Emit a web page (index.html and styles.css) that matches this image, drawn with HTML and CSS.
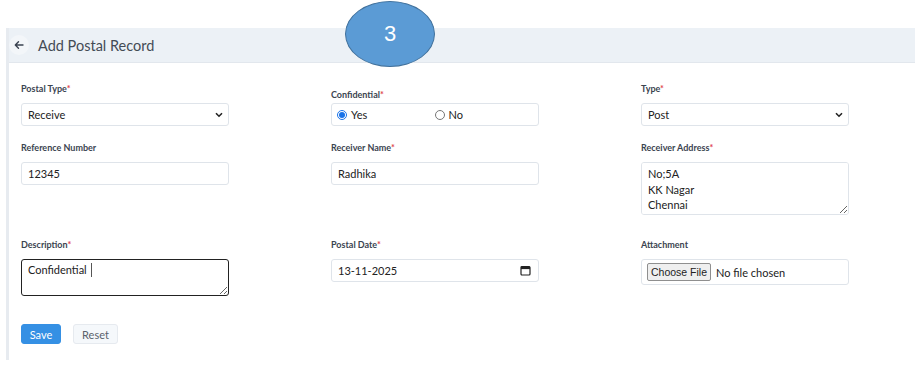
FILE: index.html
```html
<!DOCTYPE html>
<html lang="en">
<head>
    <meta charset="UTF-8">
    <meta name="viewport" content="width=device-width, initial-scale=1.0">
    <title>Add Postal Record</title>
    <link rel="stylesheet" href="styles.css">
</head>
<body>
<div class="page">
    <div class="panel">
        <div class="panel-head">
            <button class="back-btn" type="button" aria-label="Back">
                <svg width="10" height="10" viewBox="0 0 10 10"><path d="M9 5H1.5M4.5 1.8L1.3 5l3.2 3.2" fill="none" stroke="#3a4350" stroke-width="1.4" stroke-linecap="round" stroke-linejoin="round"/></svg>
            </button>
            <h1 class="title">Add Postal Record</h1>
        </div>

        <!-- step marker -->
        <div class="step">3</div>

        <form class="record-form">
            <div class="field">
                <label class="label">Postal Type<span class="req">*</span></label>
                <div class="select-wrap">
                    <select class="control">
                        <option>Receive</option>
                        <option>Send</option>
                    </select>
                    <svg class="chev" width="8" height="6" viewBox="0 0 8 6"><path d="M1 1.2l3 3 3-3" fill="none" stroke="#222" stroke-width="1.6"/></svg>
                </div>
            </div>
            <div class="field">
                <label class="label label-tight">Confidential<span class="req">*</span></label>
                <div class="control radio-box">
                    <label class="radio"><input type="radio" name="conf" checked> Yes</label>
                    <label class="radio"><input type="radio" name="conf"> No</label>
                </div>
            </div>
            <div class="field">
                <label class="label">Type<span class="req">*</span></label>
                <div class="select-wrap">
                    <select class="control">
                        <option>Post</option>
                        <option>Courier</option>
                    </select>
                    <svg class="chev" width="8" height="6" viewBox="0 0 8 6"><path d="M1 1.2l3 3 3-3" fill="none" stroke="#222" stroke-width="1.6"/></svg>
                </div>
            </div>

            <div class="field">
                <label class="label">Reference Number</label>
                <input class="control" type="text" value="12345">
            </div>
            <div class="field">
                <label class="label">Receiver Name<span class="req">*</span></label>
                <input class="control" type="text" value="Radhika">
            </div>
            <div class="field">
                <label class="label">Receiver Address<span class="req">*</span></label>
                <textarea class="control address">No;5A
KK Nagar
Chennai</textarea>
            </div>

            <div class="field">
                <label class="label">Description<span class="req">*</span></label>
                <div class="caret-wrap">
                    <textarea class="control desc">Confidential</textarea>
                    <span class="caret"></span>
                </div>
            </div>
            <div class="field">
                <label class="label">Postal Date<span class="req">*</span></label>
                <div class="date-wrap">
                    <input class="control date" type="text" value="13-11-2025">
                    <svg class="cal" width="11" height="11" viewBox="0 0 11 11"><rect x="1" y="1.5" width="9" height="8.5" rx="1" fill="none" stroke="#222" stroke-width="1.2"/><rect x="1" y="1.5" width="9" height="2.6" fill="#222"/></svg>
                </div>
            </div>
            <div class="field">
                <label class="label">Attachment</label>
                <div class="control file-box">
                    <span class="file-btn">Choose File</span>
                    <span class="file-name">No file chosen</span>
                </div>
            </div>
        </form>

        <div class="actions">
            <button class="btn btn-save" type="button">Save</button>
            <button class="btn btn-reset" type="reset">Reset</button>
        </div>
    </div>
</div>
</body>
</html>
```

FILE: styles.css
```css
:root {
    --head-bg: #ecf1f6;
    --line: #dfe4ea;
    --label: #3b4450;
    --text: #222;
    --req: #e0454f;
    --blue: #3590e4;
}

body {
    margin: 0;
    background: #fff;
    font-family: 'Lato', 'Open Sans', sans-serif;
    color: var(--text);
}

.page {
    padding-top: 28px;
}

.panel {
    position: relative;
    margin-left: 6px;
    border-left: 3px solid #e7ebf0;
    height: 332px;
}

.panel-head {
    height: 34px;
    background: var(--head-bg);
    border-bottom: 1px solid #e2e7ed;
    display: flex;
    align-items: center;
}

.back-btn {
    width: 20px;
    height: 20px;
    border-radius: 50%;
    border: none;
    background: #f3f6f9;
    display: flex;
    align-items: center;
    justify-content: center;
    padding: 0;
}

.title {
    margin: 0 0 0 9px;
    font-size: 14.5px;
    font-weight: 400;
    color: #434b55;
}

.step {
    position: absolute;
    left: 336px;
    top: -27px;
    width: 88px;
    height: 64px;
    border-radius: 50%;
    background: #5b9bd5;
    border: 1.5px solid #41719c;
    color: #fff;
    font-family: 'Liberation Sans', Arial, sans-serif;
    font-size: 22px;
    display: flex;
    align-items: center;
    justify-content: center;
}

.record-form {
    display: grid;
    grid-template-columns: 208px 208px 208px;
    column-gap: 102px;
    padding: 20px 0 0 12px;
}

.field {
    display: flex;
    flex-direction: column;
    margin-bottom: 16px;
}

.field:nth-child(n+4) {
    margin-bottom: 24px;
}

.field:nth-child(n+7) {
    margin-bottom: 0;
}

.label {
    font-size: 9px;
    font-weight: 700;
    color: var(--label);
    line-height: 12px;
    margin-bottom: 8px;
}

.label-tight {
    margin-top: 6px;
    margin-bottom: 2px;
}

.req {
    color: var(--req);
}

.control {
    box-sizing: border-box;
    width: 208px;
    height: 23px;
    border: 1px solid var(--line);
    border-radius: 3px;
    background: #fff;
    font-family: inherit;
    font-size: 11px;
    color: var(--text);
    padding: 0 6px;
    margin: 0;
    outline: none;
}

.select-wrap,
.caret-wrap,
.date-wrap {
    position: relative;
}

select.control {
    display: block;
    appearance: none;
    -webkit-appearance: none;
}

.chev {
    position: absolute;
    right: 6px;
    top: 9px;
    pointer-events: none;
}

.radio-box {
    display: flex;
    align-items: center;
    padding-left: 5px;
}

.radio {
    display: flex;
    align-items: center;
    width: 101px;
    font-size: 11px;
}

.radio input {
    margin: 0 4px 0 0;
    width: 10px;
    height: 10px;
    accent-color: #1a73e8;
}

.address {
    height: 53px;
    padding: 3px 6px;
    line-height: 15.5px;
    resize: vertical;
    display: block;
}

.desc {
    display: block;
    height: 37px;
    border: 1.5px solid #222;
    border-radius: 3px;
    padding: 3px 6px;
    line-height: 14px;
    resize: vertical;
}

.caret {
    position: absolute;
    left: 70px;
    top: 4px;
    width: 1px;
    height: 14px;
    background: #555;
}

.date {
    display: block;
}

.cal {
    position: absolute;
    right: 8px;
    top: 6px;
}

.file-box {
    display: flex;
    align-items: center;
    height: 26px;
    padding: 0 5px;
    gap: 5px;
}

.file-btn {
    font-size: 10.5px;
    border: 1px solid #8f8f8f;
    background: #efefef;
    border-radius: 2px;
    padding: 2px 3px;
    font-family: 'Liberation Sans', Arial, sans-serif;
}

.file-name {
    font-size: 11px;
}

.actions {
    display: flex;
    gap: 12px;
    padding-left: 12px;
    margin-top: 28px;
}

.btn {
    height: 20px;
    border-radius: 3px;
    font-family: inherit;
    font-size: 11px;
    padding: 0 7px;
    cursor: pointer;
}

.btn-save {
    width: 40px;
    background: var(--blue);
    border: 1px solid var(--blue);
    color: #fff;
}

.btn-reset {
    width: 45px;
    background: #f5f8fb;
    border: 1px solid #e6eaef;
    color: #5a626c;
}
```
